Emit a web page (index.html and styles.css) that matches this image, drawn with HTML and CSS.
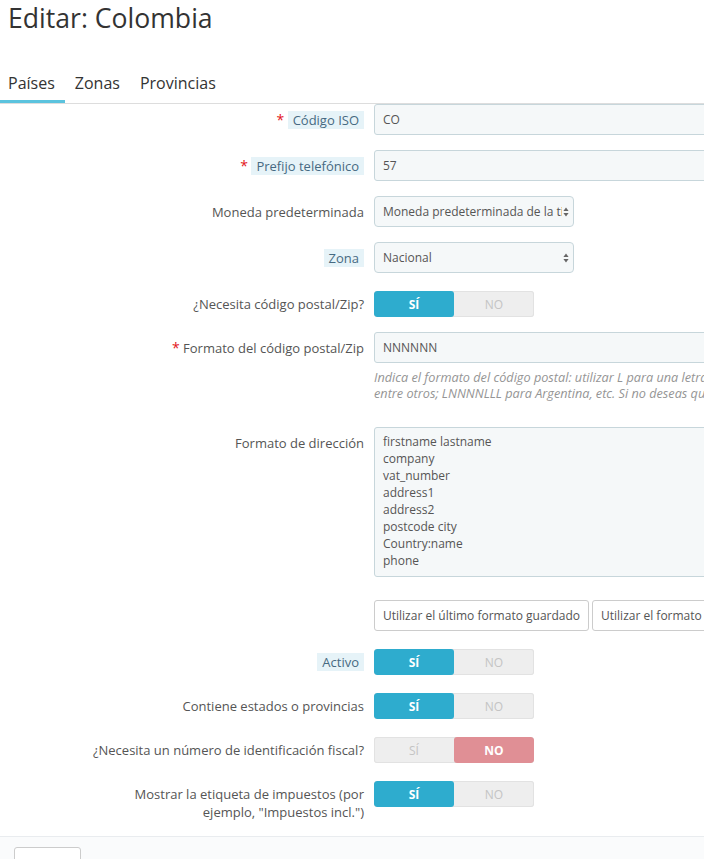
FILE: index.html
```html
<!DOCTYPE html>
<html lang="es">
<head>
<meta charset="utf-8">
<title>Editar: Colombia</title>
<link rel="stylesheet" href="styles.css">
</head>
<body>
<div class="page">
  <h1 class="title">Editar: Colombia</h1>
  <ul class="tabs">
    <li class="tab active"><a href="#">Países</a></li>
    <li class="tab"><a href="#">Zonas</a></li>
    <li class="tab"><a href="#">Provincias</a></li>
  </ul>

  <form class="form">
    <div class="row">
      <label class="lbl"><span class="req">*</span> <span class="tip">Código ISO</span></label>
      <div class="ctl"><input class="inp" type="text" value="CO"></div>
    </div>
    <div class="row">
      <label class="lbl"><span class="req">*</span> <span class="tip">Prefijo telefónico</span></label>
      <div class="ctl"><input class="inp" type="text" value="57"></div>
    </div>
    <div class="row">
      <label class="lbl">Moneda predeterminada</label>
      <div class="ctl">
        <div class="sel"><span class="sel-text">Moneda predeterminada de la tienda</span><svg class="sel-arrow" width="6" height="10" viewBox="0 0 6 10"><path d="M3 0.5 L5.6 4 L0.4 4 Z M3 9.5 L5.6 6 L0.4 6 Z" fill="#666"/></svg></div>
      </div>
    </div>
    <div class="row">
      <label class="lbl"><span class="tip">Zona</span></label>
      <div class="ctl">
        <div class="sel"><span class="sel-text">Nacional</span><svg class="sel-arrow" width="6" height="10" viewBox="0 0 6 10"><path d="M3 0.5 L5.6 4 L0.4 4 Z M3 9.5 L5.6 6 L0.4 6 Z" fill="#666"/></svg></div>
      </div>
    </div>
    <div class="row row-switch">
      <label class="lbl">¿Necesita código postal/Zip?</label>
      <div class="ctl">
        <div class="switch"><span class="opt on-yes">SÍ</span><span class="opt off">NO</span></div>
      </div>
    </div>
    <div class="row">
      <label class="lbl"><span class="req">*</span> Formato del código postal/Zip</label>
      <div class="ctl">
        <input class="inp" type="text" value="NNNNNN">
        <p class="help"><span class="help-line">Indica el formato del código postal: utilizar L para una letra, N para un número y C para el código ISO del país. Ejemplo: NNNNN para Estados Unidos, Francia, España,</span><br><span class="help-line">entre otros; LNNNNLLL para Argentina, etc. Si no deseas que PrestaShop verifique el código postal, déjalo en blanco.</span></p>
      </div>
    </div>
    <div class="row row-area">
      <label class="lbl">Formato de dirección</label>
      <div class="ctl">
        <div class="area">firstname lastname<br>company<br>vat_number<br>address1<br>address2<br>postcode city<br>Country:name<br>phone</div>
      </div>
    </div>
    <div class="row">
      <div class="lbl"></div>
      <div class="ctl btns">
        <button class="btn" type="button">Utilizar el último formato guardado</button>
        <button class="btn" type="button">Utilizar el formato predeterminado</button>
      </div>
    </div>
    <div class="row row-switch">
      <label class="lbl"><span class="tip">Activo</span></label>
      <div class="ctl">
        <div class="switch"><span class="opt on-yes">SÍ</span><span class="opt off">NO</span></div>
      </div>
    </div>
    <div class="row row-switch">
      <label class="lbl">Contiene estados o provincias</label>
      <div class="ctl">
        <div class="switch"><span class="opt on-yes">SÍ</span><span class="opt off">NO</span></div>
      </div>
    </div>
    <div class="row row-switch">
      <label class="lbl">¿Necesita un número de identificación fiscal?</label>
      <div class="ctl">
        <div class="switch"><span class="opt off">SÍ</span><span class="opt on-no">NO</span></div>
      </div>
    </div>
    <div class="row row-switch">
      <label class="lbl">Mostrar la etiqueta de impuestos (por ejemplo, "Impuestos incl.")</label>
      <div class="ctl">
        <div class="switch"><span class="opt on-yes">SÍ</span><span class="opt off">NO</span></div>
      </div>
    </div>
  </form>

  <div class="footer">
    <button class="btn-foot" type="button"></button>
  </div>
</div>
</body>
</html>
```

FILE: styles.css
```css
html, body {
  margin: 0;
  padding: 0;
  overflow: hidden;
  background: #fff;
}

body {
  font-family: "Open Sans", "Liberation Sans", sans-serif;
  color: #555;
}

.page {
  width: 1200px;
}

.title {
  margin: 0;
  padding: 2px 0 0 8px;
  font-size: 26.6px;
  line-height: 32px;
  font-weight: 400;
  color: #333;
}

.tabs {
  list-style: none;
  margin: 29px 0 0 0;
  padding: 0;
  display: flex;
  border-bottom: 1px solid #ddd;
}

.tab a {
  display: block;
  padding: 10px 10px 7px 10px;
  font-size: 16px;
  line-height: 20px;
  color: #333;
  text-decoration: none;
  border-bottom: 3px solid transparent;
}

.tab:first-child a {
  padding-left: 8px;
}

.tab.active a {
  border-bottom-color: #5bc3de;
}

.form {
  padding: 0;
  margin: 0;
}

.row {
  display: grid;
  grid-template-columns: 364px 800px;
  column-gap: 10px;
  margin-bottom: 15px;
}

.lbl {
  display: block;
  box-sizing: border-box;
  text-align: right;
  padding: 7px 0 0 84px;
  font-size: 13px;
  line-height: 18px;
  color: #555;
}

.req {
  color: #e3141b;
  font-size: 14px;
}

.tip {
  background: #e6f3f8;
  color: #466a82;
  padding: 0 5px;
}

.ctl {
  min-width: 0;
}

.inp {
  display: block;
  box-sizing: border-box;
  width: 100%;
  height: 31px;
  margin: 0;
  padding: 0 8px;
  font-family: inherit;
  font-size: 12px;
  color: #555;
  background: #f5f8f9;
  border: 1px solid #c7d6db;
  border-radius: 3px;
  outline: none;
}

.sel {
  box-sizing: border-box;
  width: 200px;
  height: 31px;
  padding: 0 4px 0 8px;
  display: flex;
  align-items: center;
  gap: 1px;
  background: #f5f8f9;
  border: 1px solid #c7d6db;
  border-radius: 4px;
  font-size: 12px;
  color: #555;
}

.sel-text {
  flex: 1;
  white-space: nowrap;
  overflow: hidden;
}

.sel-arrow {
  flex: none;
}

.row-switch .ctl {
  padding-top: 3px;
}

.switch {
  display: flex;
  width: 160px;
  height: 26px;
  border-radius: 3px;
  overflow: hidden;
  background: #eee;
  box-shadow: inset 0 0 0 1px #e2e2e2;
}

.opt {
  flex: 1;
  display: flex;
  align-items: center;
  justify-content: center;
  font-size: 12px;
  text-transform: uppercase;
}

.opt.off {
  color: #c4c4c4;
}

.opt.on-yes {
  background: #2eacce;
  color: #fff;
  font-weight: 700;
  border-radius: 3px;
}

.opt.on-no {
  background: #e08f95;
  color: #fff;
  font-weight: 700;
  border-radius: 3px;
}

.help {
  margin: 6px 0 11px 0;
  font-size: 12.7px;
  line-height: 16px;
  font-style: italic;
  color: #959595;
}

.help-line {
  white-space: nowrap;
}

.area {
  box-sizing: border-box;
  height: 150px;
  padding: 5px 8px;
  font-size: 12px;
  line-height: 17px;
  color: #555;
  background: #f5f8f9;
  border: 1px solid #c7d6db;
  border-radius: 3px;
}

.row-area {
  margin-bottom: 23px;
}

.btns {
  display: flex;
  gap: 3px;
}

.btn {
  height: 31px;
  padding: 0 8px;
  font-family: inherit;
  font-size: 12px;
  color: #555;
  background: #fff;
  border: 1px solid #ccc;
  border-radius: 3px;
  white-space: nowrap;
}

.footer {
  border-top: 1px solid #e9ecef;
  background: #fafbfc;
  height: 40px;
  padding: 10px 0 0 14px;
}

.btn-foot {
  display: block;
  width: 67px;
  height: 36px;
  background: #fff;
  border: 1px solid #ccc;
  border-radius: 3px;
}
```
